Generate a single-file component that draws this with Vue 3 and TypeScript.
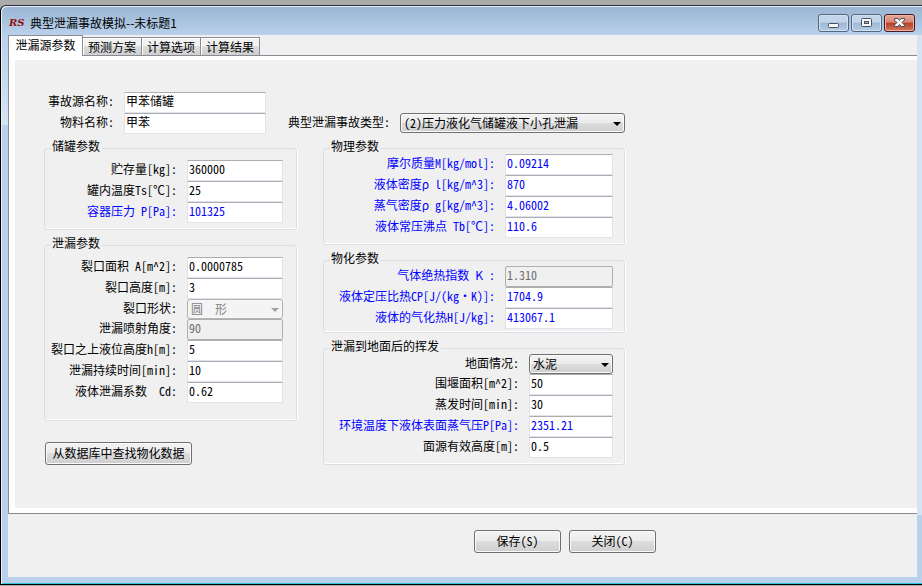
<script setup lang="ts">
import { reactive, ref } from 'vue'

interface Field {
  id: string
  label: string
  value: string
  computed?: boolean
  disabled?: boolean
  options?: string[]
}

interface Group {
  title: string
  kind: string
  fields: Field[]
}

const tabs = ['泄漏源参数', '预测方案', '计算选项', '计算结果']
const activeTab = ref(0)

const sources = reactive<Field[]>([
  { id: 'source-name', label: '事故源名称:', value: '甲苯储罐' },
  { id: 'material-name', label: '物料名称:', value: '甲苯' },
])

const accidentTypes = ['(2)压力液化气储罐液下小孔泄漏']
const accidentType = ref(accidentTypes[0])

const leftGroups = reactive<Group[]>([
  {
    title: '储罐参数',
    kind: 'tank',
    fields: [
      { id: 'storage', label: '贮存量[kg]:', value: '360000' },
      { id: 'temperature', label: '罐内温度Ts[℃]:', value: '25' },
      { id: 'pressure', label: '容器压力 P[Pa]:', value: '101325', computed: true },
    ],
  },
  {
    title: '泄漏参数',
    kind: 'leak',
    fields: [
      { id: 'area', label: '裂口面积 A[m^2]:', value: '0.0000785' },
      { id: 'height', label: '裂口高度[m]:', value: '3' },
      { id: 'shape', label: '裂口形状:', value: '圆\u00a0\u00a0形', disabled: true, options: ['圆\u00a0\u00a0形'] },
      { id: 'angle', label: '泄漏喷射角度:', value: '90', disabled: true },
      { id: 'level', label: '裂口之上液位高度h[m]:', value: '5' },
      { id: 'duration', label: '泄漏持续时间[min]:', value: '10' },
      { id: 'coefficient', label: '液体泄漏系数  Cd:', value: '0.62' },
    ],
  },
])

const rightGroups = reactive<Group[]>([
  {
    title: '物理参数',
    kind: 'physical',
    fields: [
      { id: 'molar-mass', label: '摩尔质量M[kg/mol]:', value: '0.09214', computed: true },
      { id: 'liquid-density', label: '液体密度ρ l[kg/m^3]:', value: '870', computed: true },
      { id: 'vapor-density', label: '蒸气密度ρ g[kg/m^3]:', value: '4.06002', computed: true },
      { id: 'boiling-point', label: '液体常压沸点 Tb[℃]:', value: '110.6', computed: true },
    ],
  },
  {
    title: '物化参数',
    kind: 'chemical',
    fields: [
      { id: 'adiabatic', label: '气体绝热指数 Κ :', value: '1.310', computed: true, disabled: true },
      { id: 'heat-capacity', label: '液体定压比热CP[J/(kg·K)]:', value: '1704.9', computed: true },
      { id: 'vaporization', label: '液体的气化热H[J/kg]:', value: '413067.1', computed: true },
    ],
  },
  {
    title: '泄漏到地面后的挥发',
    kind: 'ground',
    fields: [
      { id: 'ground', label: '地面情况:', value: '水泥', options: ['水泥'] },
      { id: 'dike-area', label: '围堰面积[m^2]:', value: '50' },
      { id: 'evaporation-time', label: '蒸发时间[min]:', value: '30' },
      { id: 'vapor-pressure', label: '环境温度下液体表面蒸气压P[Pa]:', value: '2351.21', computed: true },
      { id: 'source-height', label: '面源有效高度[m]:', value: '0.5' },
    ],
  },
])

const columns = [leftGroups, rightGroups]
</script>

<template>
  <div class="desktop">
    <main class="window">
      <header class="titlebar">
        <span class="logo">RS</span>
        <h1>典型泄漏事故模拟--未标题1</h1>
        <div class="window-buttons">
          <button type="button" class="caption" aria-label="最小化">
            <svg width="29" height="16" viewBox="0 0 29 16"><rect x="9.500" y="8.500" width="10" height="4" rx="1" /></svg>
          </button>
          <button type="button" class="caption" aria-label="最大化">
            <svg width="29" height="16" viewBox="0 0 29 16">
              <rect x="9.500" y="3.500" width="10" height="8" rx="1" /><rect x="12.500" y="6.500" width="4" height="2" class="hole" />
            </svg>
          </button>
          <button type="button" class="caption close" aria-label="关闭窗口">
            <svg width="29" height="16" viewBox="0 0 29 16">
              <path d="M9.500 3.500H13L14.500 5.500L16 3.500H19.500V5L17 7.500L19.500 10V11.500H16L14.500 9.500L13 11.500H9.500V10L12 7.500L9.500 5Z" />
            </svg>
          </button>
        </div>
      </header>

      <div class="client">
        <nav class="tabs" role="tablist">
          <button
            v-for="(tab, i) in tabs"
            :key="tab"
            type="button"
            role="tab"
            class="tab"
            :class="{ active: i === activeTab }"
            :aria-selected="i === activeTab"
            @click="activeTab = i"
          >{{ tab }}</button>
        </nav>

        <section class="page">
          <form class="panel" @submit.prevent>
            <div v-for="(groups, c) in columns" :key="c" class="column" :class="c === 0 ? 'left' : 'right'">
              <div v-if="c === 0" class="sources">
                <div v-for="f in sources" :key="f.id" class="field">
                  <label :for="f.id">{{ f.label }}</label>
                  <input :id="f.id" v-model="f.value" type="text" />
                </div>
              </div>
              <div v-else class="type-row">
                <label for="accident-type">典型泄漏事故类型:</label>
                <span class="combo">
                  <select id="accident-type" v-model="accidentType">
                    <option v-for="t in accidentTypes" :key="t">{{ t }}</option>
                  </select>
                </span>
              </div>

              <fieldset v-for="g in groups" :key="g.title" :class="g.kind">
                <legend>{{ g.title }}</legend>
                <div class="rows">
                  <div v-for="f in g.fields" :key="f.id" class="field" :class="{ computed: f.computed, choice: f.options }">
                    <label :for="f.id">{{ f.label }}</label>
                    <span v-if="f.options" class="combo">
                      <select :id="f.id" v-model="f.value" :disabled="f.disabled">
                        <option v-for="o in f.options" :key="o" :value="o">{{ o }}</option>
                      </select>
                    </span>
                    <input v-else :id="f.id" v-model="f.value" type="text" :disabled="f.disabled" />
                  </div>
                </div>
              </fieldset>

              <button v-if="c === 0" type="button" class="push lookup">从数据库中查找物化数据</button>
            </div>
          </form>
        </section>

        <footer class="actions">
          <button type="button" class="push">保存(S)</button>
          <button type="button" class="push">关闭(C)</button>
        </footer>
      </div>
    </main>
  </div>
</template>

<style>
body {
  background: #ababab;
}
</style>

<style scoped>
* {
  box-sizing: border-box;
}

.desktop {
  display: flex;
  min-height: 100vh;
  padding: 5px 0 1px;
  background: #ababab;
  color: #000;
  font: 12px/14px "Noto Sans CJK SC", sans-serif;
  font-feature-settings: "hwid" 1;
}

button,
input,
select {
  margin: 0;
  font: inherit;
  font-feature-settings: inherit;
  color: inherit;
}

.window {
  display: flex;
  flex: 1;
  flex-direction: column;
  padding: 0 5px 7px 7px;
  border: 1px solid #000;
  border-right: 0;
  border-top-color: #2b2b35;
  border-radius: 6px 0 0 0;
  background:
    linear-gradient(#9ab4d3 0, #b9d1ea 29px, #d6e4f1 29px, #d6e4f1 calc(100% - 69px), #b9d1ea calc(100% - 69px)) right / 5px 100% no-repeat,
    linear-gradient(#9ab4d3 0, #b9d1ea 29px, #d6e4f1 119px, #b9d1ea 119px);
  box-shadow: inset 1px 1px #e8f1fa, inset 0 -1px #35c3d8;
}

.titlebar {
  display: flex;
  align-items: center;
  height: 29px;
  padding: 5px 2px 0 1px;
}

.logo {
  width: 16px;
  color: #8f1010;
  font: italic bold 10px/12px "DejaVu Serif", serif;
}

h1 {
  flex: 1;
  margin: 0 0 0 5px;
  font: 12px/18px "Noto Sans CJK SC", sans-serif;
  font-feature-settings: normal;
}

.window-buttons {
  display: flex;
  gap: 2px;
}

.caption {
  width: 31px;
  height: 18px;
  padding: 0;
  border: 1px solid #52677f;
  border-radius: 3px;
  background: linear-gradient(#c3d5e9 0 45%, #9cb8d6 50%, #b5cde6);
  box-shadow: inset 0 0 0 1px #d3e2f1;
}

.caption svg {
  display: block;
  fill: #f7f7f7;
  stroke: #4a5060;
}

.caption .hole {
  fill: #a7b6c8;
}

.caption.close {
  border-color: #4b1620;
  background: linear-gradient(#e5a799 0, #d98675 45%, #b93d25 50%, #d17a5f);
  box-shadow: inset 0 0 0 1px #e9b5a6;
}

.client {
  display: flex;
  flex: 1;
  flex-direction: column;
  background: #f0f0f0;
}

.tabs {
  display: flex;
  align-items: flex-end;
  height: 20px;
}

.tab {
  width: 59px;
  height: 18px;
  padding: 0;
  border: 1px solid #898c95;
  border-left-width: 0;
  border-bottom: 0;
  background: linear-gradient(#f2f2f2 0 45%, #dddddd 50%, #cfcfcf);
  box-shadow: inset 1px 1px #fff;
  line-height: 17px;
}

.tab.active {
  z-index: 1;
  width: 75px;
  height: 21px;
  margin-bottom: -1px;
  padding-bottom: 3px;
  border-left-width: 1px;
  background: #fff;
}

.page {
  display: flex;
  flex: 1;
  padding: 4px 0 5px 6px;
  border: 1px solid #898c95;
  border-right: 0;
  background: #fff;
}

.panel {
  display: flex;
  flex: 1;
  align-items: flex-start;
  gap: 26px;
  padding: 32px 29px 20px;
  background: #f0f0f0;
}

.column {
  display: flex;
  flex-direction: column;
}

.left {
  width: 253px;
}

.right {
  width: 302px;
  padding-top: 20px;
}

.field {
  display: grid;
  grid-template-columns: 1fr 96px;
  gap: 10px;
  height: 21px;
}

.field.choice {
  height: 20px;
}

label {
  padding-top: 2px;
  text-align: right;
  white-space: pre;
}

.computed {
  color: #0000ff;
}

.sources {
  margin-bottom: 5px;
}

.sources .field {
  grid-template-columns: 70px 142px;
}

input {
  width: 100%;
  min-width: 0;
  height: 21px;
  padding: 0 1px 5px;
  border: 1px solid #e2e3ea;
  border-top-color: #abadb3;
  border-radius: 1px;
  background: #fff;
}

input:disabled {
  border: 1px solid #afafaf;
  border-radius: 2px;
  background: #f0f0f0;
  color: #6d6d6d;
}

.combo {
  position: relative;
  display: block;
}

.combo::after {
  position: absolute;
  top: 9px;
  right: 4px;
  border: 4px solid transparent;
  border-top-color: #000;
  border-bottom: 0;
  content: "";
  pointer-events: none;
}

.combo:has(:disabled)::after {
  border-top-color: #a0a0a0;
}

select {
  display: block;
  width: 100%;
  height: 20px;
  padding: 0 16px 0 3px;
  border: 1px solid #707070;
  border-radius: 3px;
  appearance: none;
  background: linear-gradient(#f2f2f2, #ebebeb 50%, #dddddd 50%, #cfcfcf);
  box-shadow: inset 0 0 0 1px #fafafa;
}

select:disabled {
  border-color: #adb2b5;
  background: #f4f4f4;
  color: #838383;
  opacity: 1;
}

.type-row {
  display: grid;
  grid-template-columns: 1fr 225px;
  gap: 10px;
  height: 21px;
  margin: 1px 0 5px -40px;
}

fieldset {
  min-width: 0;
  margin: 0 0 6px;
  padding: 0 13px 6px 6px;
  border: 1px solid #d5dfe5;
  border-radius: 3px;
  box-shadow: inset 0 -1px #fff, 1px 0 #fff;
}

legend {
  height: 18px;
  padding: 0 2px 4px 1px;
}

.left .rows {
  padding-top: 3px;
}

.leak {
  padding-bottom: 17px;
}

.right fieldset {
  padding-right: 11px;
}

.right .rows {
  margin-top: -3px;
}

.right .field {
  grid-template-columns: 1fr 108px;
}

.right .chemical {
  padding-bottom: 3px;
}

.right .ground .field {
  grid-template-columns: 1fr 84px;
}

.push {
  width: 87px;
  height: 23px;
  padding: 0 0 1px;
  border: 1px solid #707070;
  border-radius: 3px;
  background: linear-gradient(#f3f3f3, #ebebeb 50%, #dddddd 50%, #cfcfcf);
  box-shadow: inset 0 0 0 1px #fafafa;
}

.lookup {
  width: 147px;
  margin: 15px 0 0 1px;
}

.actions {
  display: flex;
  justify-content: center;
  gap: 8px;
  padding: 16px 0 24px 205px;
}
</style>
